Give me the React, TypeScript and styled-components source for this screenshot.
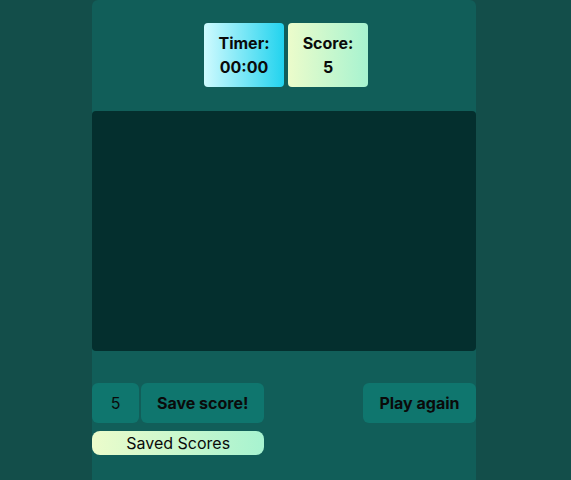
import React from "react";
import styled, { createGlobalStyle } from "styled-components";

const Global = createGlobalStyle`
  html, body { margin: 0; padding: 0; }
  body {
    background: #134e4a;
    font-family: Inter, "Noto Sans", sans-serif;
    color: #0a0a0a;
  }
`;

const Page = styled.div`
  min-height: 480px;
  padding-right: 3px;
  display: flex;
  justify-content: center;
`;

const Container = styled.main`
  width: 384px;
  min-height: 500px;
  background: #115e59;
  border-radius: 6px 6px 0 0;
  display: flex;
  flex-direction: column;
`;

const Stats = styled.div`
  display: flex;
  justify-content: center;
  gap: 4px;
  padding-top: 23px;
  padding-left: 4px;
`;

const Stat = styled.div<{ $from: string; $to: string }>`
  width: 80px;
  height: 64px;
  box-sizing: border-box;
  padding: 8px 0;
  border-radius: 4px;
  background: linear-gradient(to right, ${(p) => p.$from}, ${(p) => p.$to});
  display: flex;
  flex-direction: column;
  align-items: center;
  font-weight: 700;
  font-size: 16px;
  line-height: 24px;
`;

const Canvas = styled.div`
  margin-top: 24px;
  height: 240px;
  background: #042f2e;
  border-radius: 4px;
`;

const Controls = styled.div`
  margin-top: 32px;
  display: flex;
  justify-content: space-between;
  align-items: flex-start;
`;

const Left = styled.div`
  display: flex;
  flex-direction: column;
  gap: 8px;
`;

const Group = styled.div`
  display: flex;
  gap: 2px;
`;

const ScoreInput = styled.div`
  width: 47px;
  height: 40px;
  border-radius: 6px;
  background: #0f766e;
  display: flex;
  align-items: center;
  justify-content: center;
  font-size: 16px;
  color: #0a0a0a;
`;

const Button = styled.button<{ $wide?: boolean }>`
  height: 40px;
  padding: 0 ${(p) => (p.$wide ? "16.5px" : "16px")};
  border: none;
  border-radius: 6px;
  background: #0f766e;
  font-family: Inter, "Noto Sans", sans-serif;
  font-weight: 700;
  font-size: 16px;
  color: #0a0a0a;
  cursor: pointer;
`;

const Saved = styled.button`
  height: 24px;
  border: none;
  border-radius: 8px;
  background: linear-gradient(to right, #ecfccb, #a7f3d0);
  font-family: Inter, "Noto Sans", sans-serif;
  font-size: 16px;
  color: #0a0a0a;
  padding: 0;
`;

export default function App() {
  return (
    <>
      <Global />
      <Page>
        <Container>
          <Stats>
            <Stat $from="#cffafe" $to="#22d3ee">
              <span>Timer:</span>
              <span>00:00</span>
            </Stat>
            <Stat $from="#ecfccb" $to="#a7f3d0">
              <span>Score:</span>
              <span>5</span>
            </Stat>
          </Stats>
          <Canvas />
          <Controls>
            <Left>
              <Group>
                <ScoreInput>5</ScoreInput>
                <Button>Save score!</Button>
              </Group>
              <Saved>Saved Scores</Saved>
            </Left>
            <Button $wide>Play again</Button>
          </Controls>
        </Container>
      </Page>
    </>
  );
}
